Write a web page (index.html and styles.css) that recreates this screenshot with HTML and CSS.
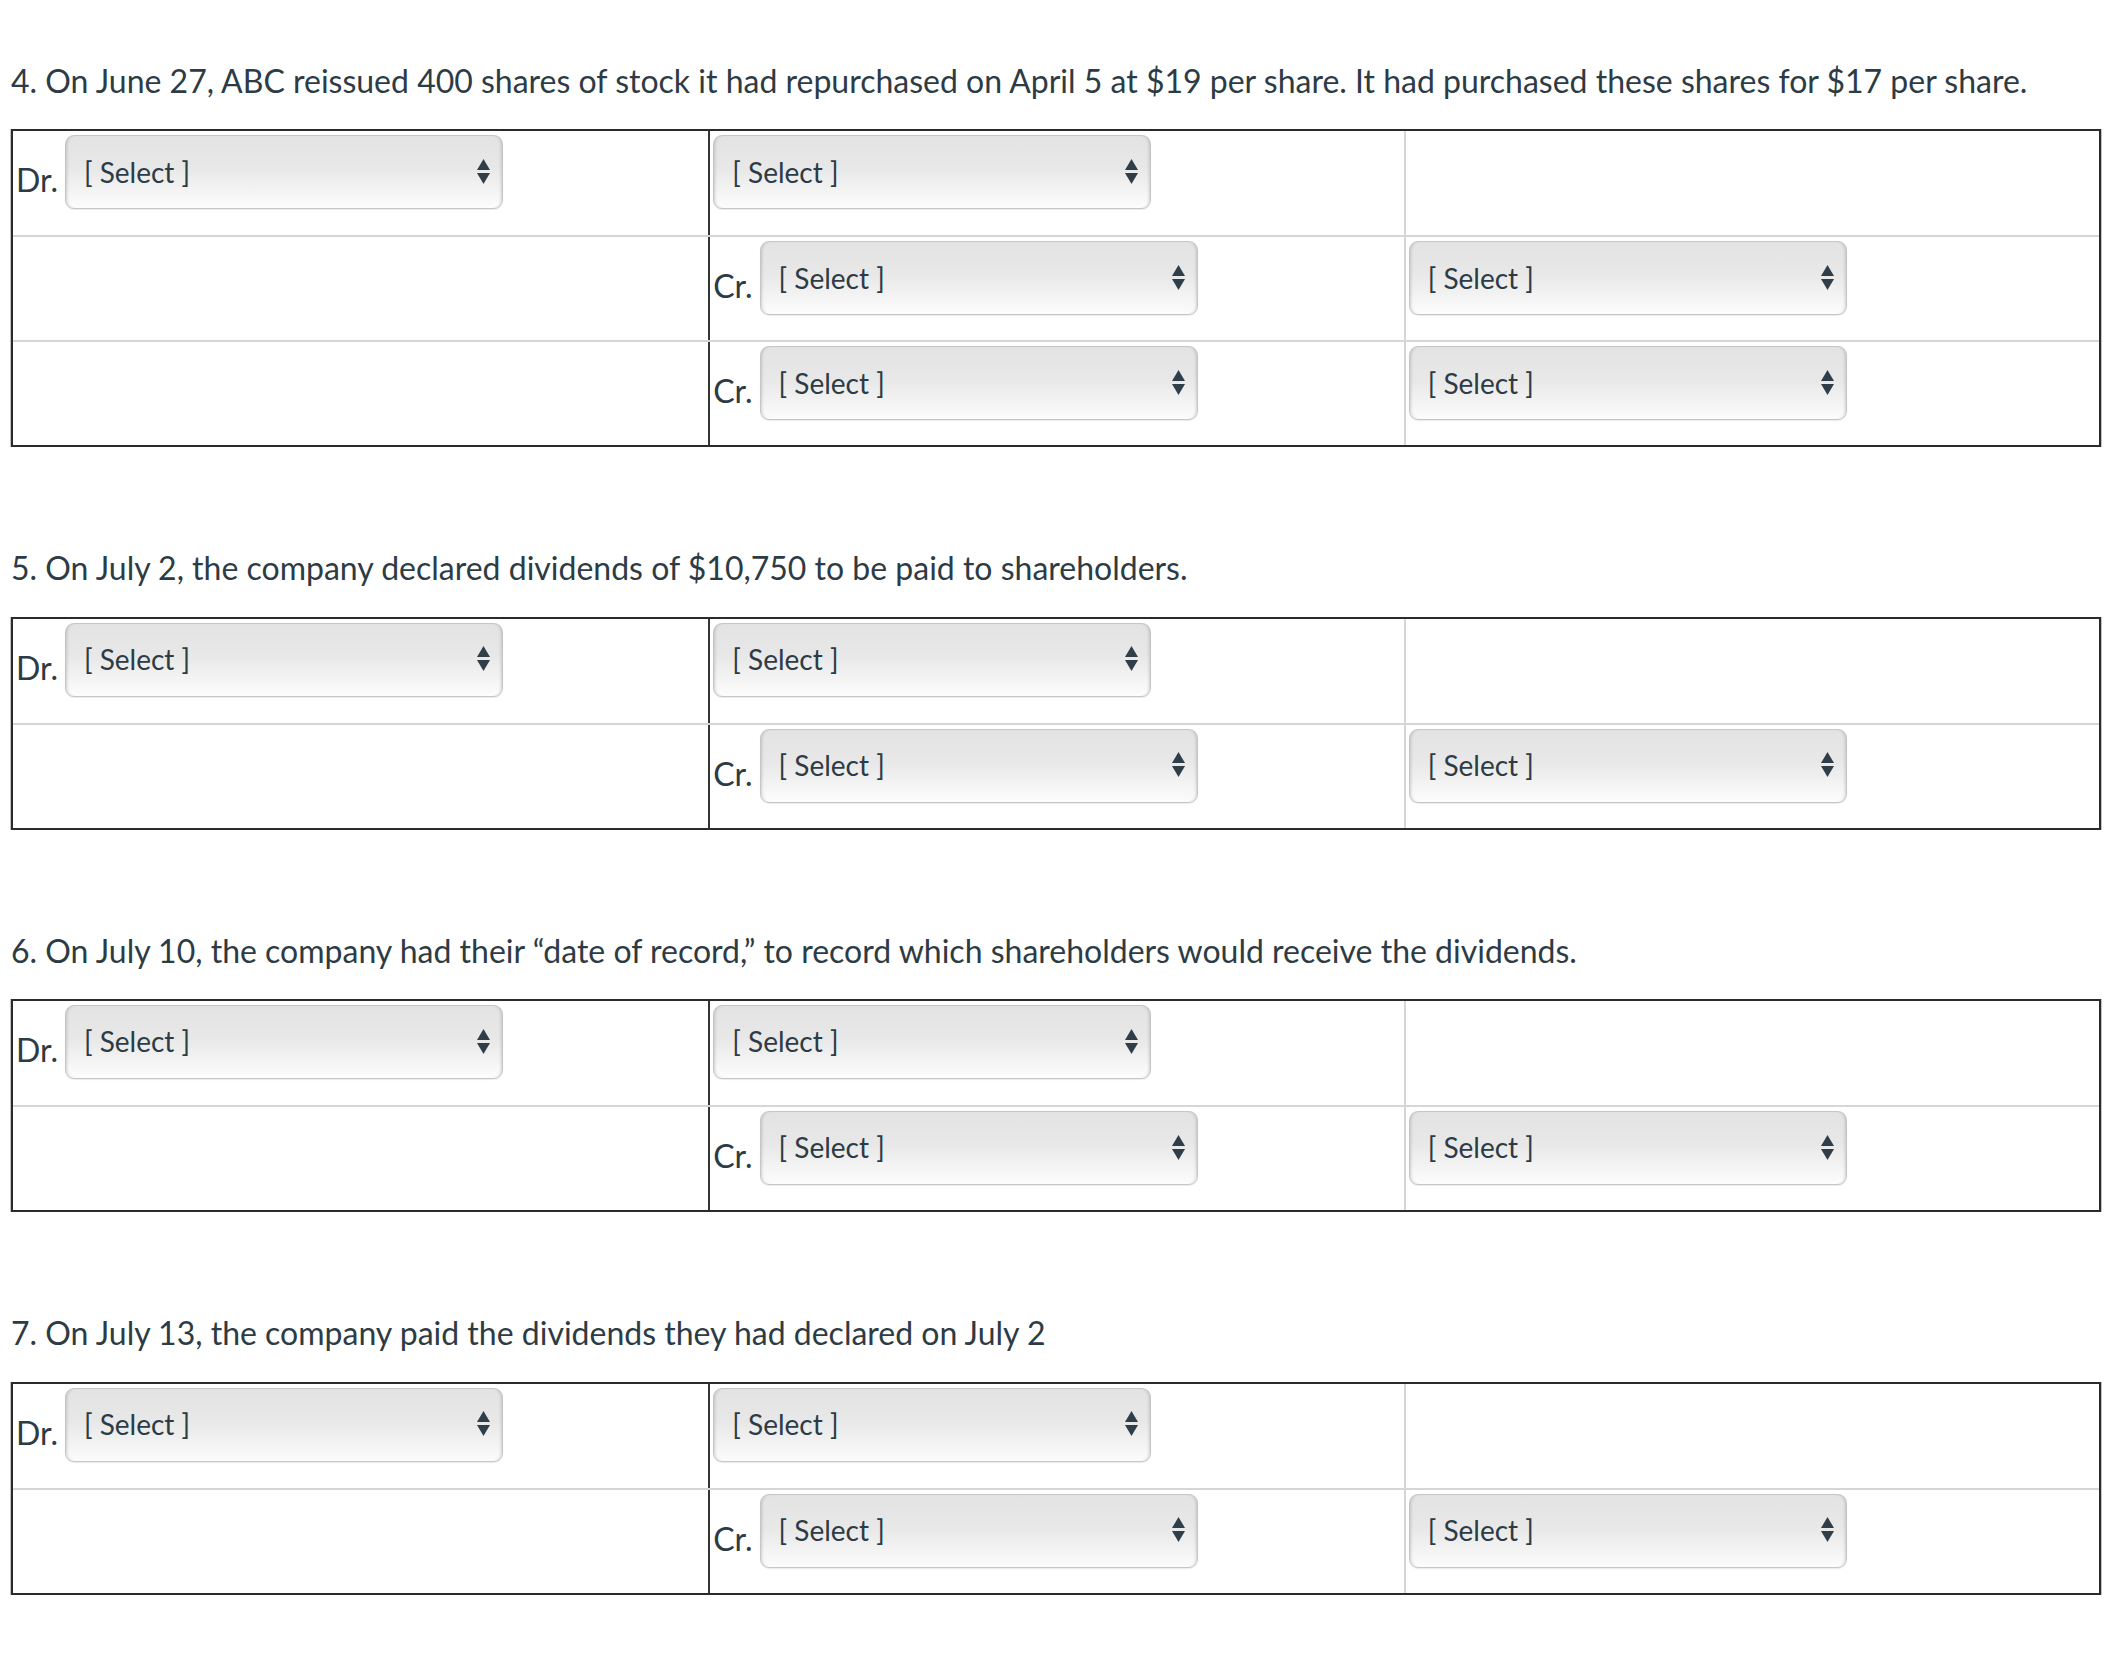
FILE: index.html
```html
<!DOCTYPE html>
<html lang="en">
<head>
<meta charset="utf-8">
<title>Journal entries</title>
<link rel="stylesheet" href="styles.css">
</head>
<body>
<div class="page">

  <section class="question">
    <p class="q-text">4. On June 27, ABC reissued 400 shares of stock it had repurchased on April 5 at $19 per share. It had purchased these shares for $17 per share.</p>
    <div class="journal">
      <div class="jrow">
        <div class="jcell"><span class="lbl">Dr.</span><div class="sel"><span class="sel-text">[ Select ]</span><svg class="arr" viewBox="0 0 13 25" width="13" height="25"><polygon points="6.5,0 13,11 0,11"/><polygon points="0,14 13,14 6.5,25"/></svg></div></div>
        <div class="jcell dark"><div class="sel"><span class="sel-text">[ Select ]</span><svg class="arr" viewBox="0 0 13 25" width="13" height="25"><polygon points="6.5,0 13,11 0,11"/><polygon points="0,14 13,14 6.5,25"/></svg></div></div>
        <div class="jcell light"></div>
      </div>
      <div class="jrow">
        <div class="jcell"></div>
        <div class="jcell dark"><span class="lbl">Cr.</span><div class="sel"><span class="sel-text">[ Select ]</span><svg class="arr" viewBox="0 0 13 25" width="13" height="25"><polygon points="6.5,0 13,11 0,11"/><polygon points="0,14 13,14 6.5,25"/></svg></div></div>
        <div class="jcell light"><div class="sel"><span class="sel-text">[ Select ]</span><svg class="arr" viewBox="0 0 13 25" width="13" height="25"><polygon points="6.5,0 13,11 0,11"/><polygon points="0,14 13,14 6.5,25"/></svg></div></div>
      </div>
      <div class="jrow">
        <div class="jcell"></div>
        <div class="jcell dark"><span class="lbl">Cr.</span><div class="sel"><span class="sel-text">[ Select ]</span><svg class="arr" viewBox="0 0 13 25" width="13" height="25"><polygon points="6.5,0 13,11 0,11"/><polygon points="0,14 13,14 6.5,25"/></svg></div></div>
        <div class="jcell light"><div class="sel"><span class="sel-text">[ Select ]</span><svg class="arr" viewBox="0 0 13 25" width="13" height="25"><polygon points="6.5,0 13,11 0,11"/><polygon points="0,14 13,14 6.5,25"/></svg></div></div>
      </div>
    </div>
  </section>

  <section class="question">
    <p class="q-text">5. On July 2, the company declared dividends of $10,750 to be paid to shareholders.</p>
    <div class="journal">
      <div class="jrow">
        <div class="jcell"><span class="lbl">Dr.</span><div class="sel"><span class="sel-text">[ Select ]</span><svg class="arr" viewBox="0 0 13 25" width="13" height="25"><polygon points="6.5,0 13,11 0,11"/><polygon points="0,14 13,14 6.5,25"/></svg></div></div>
        <div class="jcell dark"><div class="sel"><span class="sel-text">[ Select ]</span><svg class="arr" viewBox="0 0 13 25" width="13" height="25"><polygon points="6.5,0 13,11 0,11"/><polygon points="0,14 13,14 6.5,25"/></svg></div></div>
        <div class="jcell light"></div>
      </div>
      <div class="jrow">
        <div class="jcell"></div>
        <div class="jcell dark"><span class="lbl">Cr.</span><div class="sel"><span class="sel-text">[ Select ]</span><svg class="arr" viewBox="0 0 13 25" width="13" height="25"><polygon points="6.5,0 13,11 0,11"/><polygon points="0,14 13,14 6.5,25"/></svg></div></div>
        <div class="jcell light"><div class="sel"><span class="sel-text">[ Select ]</span><svg class="arr" viewBox="0 0 13 25" width="13" height="25"><polygon points="6.5,0 13,11 0,11"/><polygon points="0,14 13,14 6.5,25"/></svg></div></div>
      </div>
    </div>
  </section>

  <section class="question">
    <p class="q-text">6. On July 10, the company had their “date of record,” to record which shareholders would receive the dividends.</p>
    <div class="journal">
      <div class="jrow">
        <div class="jcell"><span class="lbl">Dr.</span><div class="sel"><span class="sel-text">[ Select ]</span><svg class="arr" viewBox="0 0 13 25" width="13" height="25"><polygon points="6.5,0 13,11 0,11"/><polygon points="0,14 13,14 6.5,25"/></svg></div></div>
        <div class="jcell dark"><div class="sel"><span class="sel-text">[ Select ]</span><svg class="arr" viewBox="0 0 13 25" width="13" height="25"><polygon points="6.5,0 13,11 0,11"/><polygon points="0,14 13,14 6.5,25"/></svg></div></div>
        <div class="jcell light"></div>
      </div>
      <div class="jrow">
        <div class="jcell"></div>
        <div class="jcell dark"><span class="lbl">Cr.</span><div class="sel"><span class="sel-text">[ Select ]</span><svg class="arr" viewBox="0 0 13 25" width="13" height="25"><polygon points="6.5,0 13,11 0,11"/><polygon points="0,14 13,14 6.5,25"/></svg></div></div>
        <div class="jcell light"><div class="sel"><span class="sel-text">[ Select ]</span><svg class="arr" viewBox="0 0 13 25" width="13" height="25"><polygon points="6.5,0 13,11 0,11"/><polygon points="0,14 13,14 6.5,25"/></svg></div></div>
      </div>
    </div>
  </section>

  <section class="question">
    <p class="q-text">7. On July 13, the company paid the dividends they had declared on July 2</p>
    <div class="journal">
      <div class="jrow">
        <div class="jcell"><span class="lbl">Dr.</span><div class="sel"><span class="sel-text">[ Select ]</span><svg class="arr" viewBox="0 0 13 25" width="13" height="25"><polygon points="6.5,0 13,11 0,11"/><polygon points="0,14 13,14 6.5,25"/></svg></div></div>
        <div class="jcell dark"><div class="sel"><span class="sel-text">[ Select ]</span><svg class="arr" viewBox="0 0 13 25" width="13" height="25"><polygon points="6.5,0 13,11 0,11"/><polygon points="0,14 13,14 6.5,25"/></svg></div></div>
        <div class="jcell light"></div>
      </div>
      <div class="jrow">
        <div class="jcell"></div>
        <div class="jcell dark"><span class="lbl">Cr.</span><div class="sel"><span class="sel-text">[ Select ]</span><svg class="arr" viewBox="0 0 13 25" width="13" height="25"><polygon points="6.5,0 13,11 0,11"/><polygon points="0,14 13,14 6.5,25"/></svg></div></div>
        <div class="jcell light"><div class="sel"><span class="sel-text">[ Select ]</span><svg class="arr" viewBox="0 0 13 25" width="13" height="25"><polygon points="6.5,0 13,11 0,11"/><polygon points="0,14 13,14 6.5,25"/></svg></div></div>
      </div>
    </div>
  </section>

</div>
</body>
</html>
```

FILE: styles.css
```css
html, body {
  margin: 0;
  padding: 0;
  background: #ffffff;
}

body {
  font-family: Lato, "Open Sans", "Liberation Sans", sans-serif;
  font-size: 32px;
  color: #2d3b45;
}

.page {
  padding: 62px 21px 0 11px;
  width: 2090px;
}

.question {
  margin: 0 0 102px 0;
}

.q-text {
  margin: 0 0 29px 0;
  line-height: 1.2;
  white-space: nowrap;
}

.journal {
  border: 2px solid #2b2b2b;
  box-shadow: 1px 0 0 #c4c4c4, -1px 0 0 #c4c4c4;
}

.jrow {
  display: grid;
  grid-template-columns: 1fr 1fr 1fr;
  height: 105px;
  box-sizing: border-box;
  border-top: 2px solid #d6d6d6;
}

.jrow:first-child {
  height: 104px;
  border-top: 0;
}

.jcell {
  display: flex;
  align-items: flex-start;
  padding: 4px 3px 0 3px;
  box-sizing: border-box;
  min-width: 0;
}

.jcell.dark {
  border-left: 2px solid #353535;
}

.jcell.light {
  border-left: 2px solid #d6d6d6;
}

.lbl {
  margin: 26px 7px 0 0;
  line-height: 1.2;
}

.sel {
  display: flex;
  align-items: center;
  width: 438px;
  height: 74px;
  box-sizing: border-box;
  padding: 0 12px 0 18px;
  border: 1px solid #c6c6c6;
  border-radius: 9px;
  font-size: 28px;
  background: linear-gradient(to bottom, #e3e3e3 0%, #e8e8e8 45%, #f3f3f3 75%, #fcfcfc 100%);
  box-shadow:
    inset 3px 0 3px -2px rgba(0, 0, 0, 0.16),
    inset -3px 0 3px -2px rgba(0, 0, 0, 0.16),
    inset 0 -2px 2px -1px rgba(255, 255, 255, 0.9),
    0 1px 1px rgba(0, 0, 0, 0.08);
}

.sel-text {
  line-height: 1.2;
  color: #2d3b45;
  white-space: nowrap;
}

.arr {
  margin-left: auto;
  margin-top: -2px;
  fill: #2f3e49;
  flex: none;
}
```
